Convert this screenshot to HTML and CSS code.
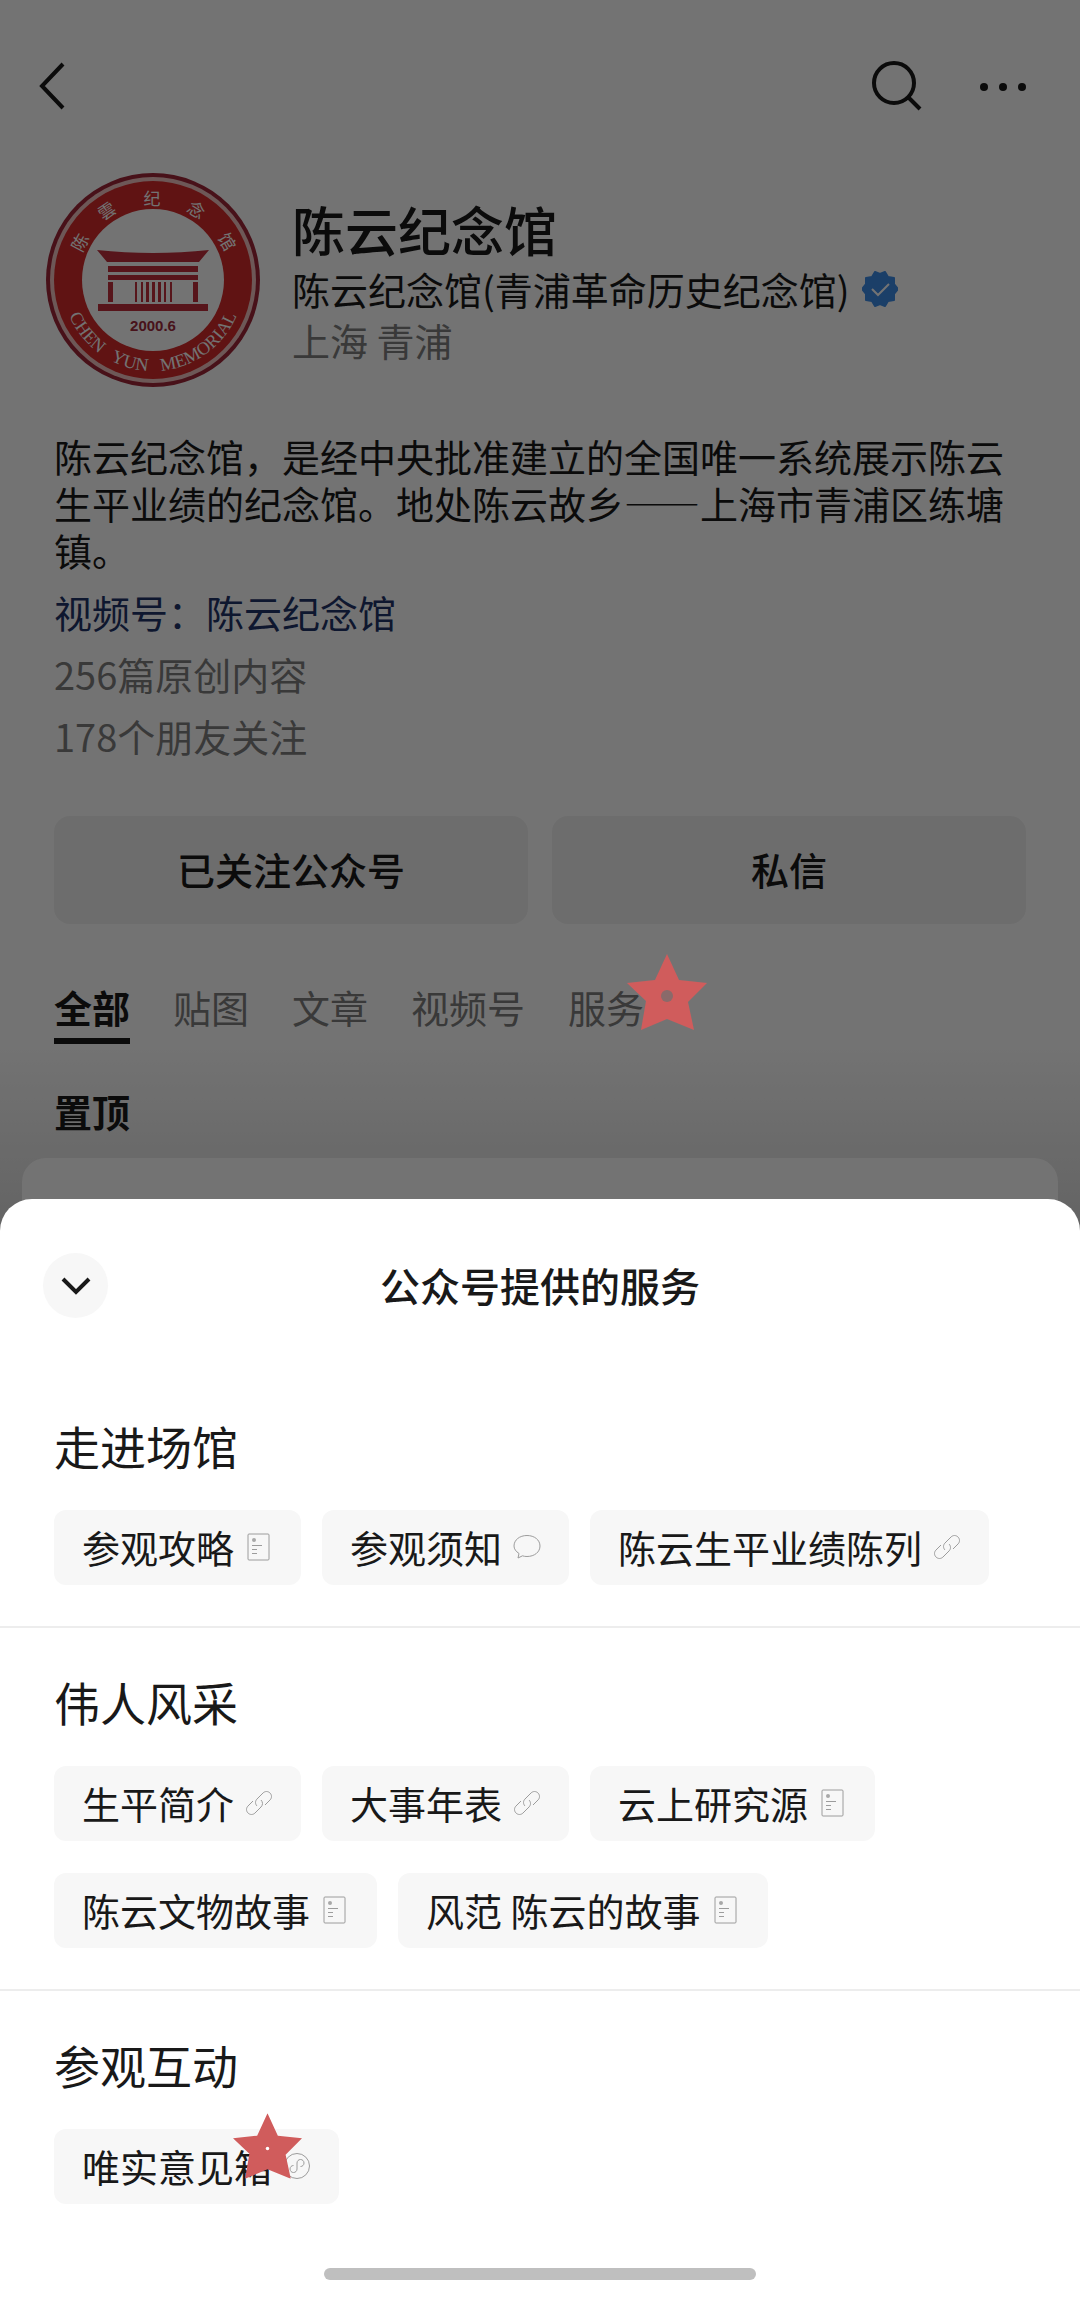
FILE: index.html
```html
<!DOCTYPE html>
<html lang="zh-CN">
<head>
    <meta charset="UTF-8">
    <meta name="viewport" content="width=device-width, initial-scale=1.0">
    <title>陈云纪念馆</title>
    <link rel="stylesheet" href="styles.css">
</head>
<body>
    <!-- shared icons -->
    <svg class="sprite" aria-hidden="true">
        <symbol id="icon-doc" viewBox="0 0 28 28">
            <rect x="3" y="1" width="21" height="26" rx="1"/>
            <circle class="fill" cx="9" cy="7" r="2"/>
            <path d="M7 12.500h10M7 16.500h5M7 20.500h5"/>
        </symbol>
        <symbol id="icon-chat" viewBox="0 0 28 28">
            <path d="M5 25l1-4.500C3 18.500 1 16 1 13 1 7 6.500 2.500 14 2.500S27 7 27 13s-5.500 10.500-13 10.500c-1.700 0-3.200-.200-4.500-.700z"/>
        </symbol>
        <symbol id="icon-link" viewBox="0 0 28 28">
            <path d="M12 17c-2-2-2-5 0-7l6-6c2-2 5-2 7 0s2 5 0 7l-5 5"/>
            <path d="M16 11c2 2 2 5 0 7l-6 6c-2 2-5 2-7 0s-2-5 0-7l5-5"/>
        </symbol>
        <symbol id="icon-mini" viewBox="0 0 28 28">
            <circle cx="14" cy="14" r="12.500"/>
            <path d="M10.500 13.500c-2 0-3.500 1.500-3.500 3.500s1.500 3.500 3.500 3.500 3.500-1.500 3.500-3.500v-6c0-2 1.500-3.500 3.500-3.500s3.500 1.500 3.500 3.500-1.500 3.500-3.500 3.500"/>
        </symbol>
        <symbol id="icon-star" viewBox="0 0 80 76">
            <path d="M40 0l12 26 28 3-19 19 6 28-27-11-26 11 5-29L0 29l28-3z"/>
        </symbol>
    </svg>

    <main class="page">
        <header class="topbar">
            <button class="icon-btn" aria-label="返回">
                <svg width="30" height="50" viewBox="0 0 30 50"><path d="M25 3L4 25l21 22"/></svg>
            </button>
            <div class="topbar-right">
                <button class="icon-btn" aria-label="搜索">
                    <svg width="54" height="54" viewBox="0 0 54 54"><circle cx="24" cy="24" r="20"/><path d="M38 38l12 12"/></svg>
                </button>
                <button class="icon-btn" aria-label="更多">
                    <svg width="50" height="12" viewBox="0 0 50 12"><g class="fill"><circle cx="6" cy="7" r="4"/><circle cx="25" cy="7" r="4"/><circle cx="44" cy="7" r="4"/></g></svg>
                </button>
            </div>
        </header>

        <section class="profile">
            <svg class="logo" viewBox="0 0 214 214" role="img" aria-label="陈云纪念馆">
                <defs>
                    <path id="arc-bottom" d="M16 107a91 91 0 0 0 182 0"/>
                </defs>
                <circle cx="107" cy="107" r="107" fill="#a02638"/>
                <circle cx="107" cy="107" r="103" fill="#f2c4c2"/>
                <circle cx="107" cy="107" r="99" fill="#d42a2b"/>
                <circle cx="107" cy="107" r="71" fill="#fff"/>
                <g class="logo-cn">
                    <text transform="translate(33 69) rotate(-62)">陈</text>
                    <text transform="translate(60 37) rotate(-34)">雲</text>
                    <text transform="translate(106 24)">纪</text>
                    <text transform="translate(151 36) rotate(32)">念</text>
                    <text transform="translate(182 68) rotate(60)">馆</text>
                </g>
                <text class="logo-en"><textPath href="#arc-bottom" startOffset="50%" text-anchor="middle" xml:space="preserve">CHEN &#160; YUN &#160; MEMORIAL</textPath></text>
                <g fill="#c0303c">
                    <path d="M51 77c37 4 75 4 112 0l-10 12H61z"/>
                    <path d="M62 93h90v6H62zM62 102h90v5H62zM62 109h5v20h-5zM147 109h5v20h-5zM52 131h110v7H52z"/>
                    <path d="M89 109h2v20h-2zM95 109h2v20h-2zM100 109h3v20h-3zM106 109h3v20h-3zM112 109h3v20h-3zM118 109h2v20h-2zM124 109h2v20h-2z"/>
                </g>
                <text class="logo-date" x="107" y="158">2000.6</text>
            </svg>
            <div class="profile-text">
                <h1>陈云纪念馆</h1>
                <div class="company">
                    <span>陈云纪念馆(青浦革命历史纪念馆)</span>
                    <svg width="36" height="36" viewBox="0 0 36 36" role="img" aria-label="已认证">
                        <path fill="#3d8ce6" stroke="#3d8ce6" stroke-width="2" stroke-linejoin="round" d="M18 3l5-2 3 5 6 1v6l4 5-4 5v6l-6 1-3 5-5-2-5 2-3-5-6-1v-6l-4-5 4-5V7l6-1 3-5z"/>
                        <path fill="none" stroke="#fff" stroke-width="2" d="M10 18l6 6 11-11"/>
                    </svg>
                </div>
                <div class="muted">上海 青浦</div>
            </div>
        </section>

        <section class="about">
            <p>陈云纪念馆，是经中央批准建立的全国唯一系统展示陈云生平业绩的纪念馆。地处陈云故乡——上海市青浦区练塘镇。</p>
            <a href="#channel">视频号：陈云纪念馆</a>
            <div class="muted">256篇原创内容</div>
            <div class="muted">178个朋友关注</div>
        </section>

        <div class="actions">
            <button>已关注公众号</button>
            <button>私信</button>
        </div>

        <nav class="tabs">
            <a class="active" href="#all">全部</a>
            <a href="#images">贴图</a>
            <a href="#articles">文章</a>
            <a href="#channel">视频号</a>
            <a href="#services">服务</a>
        </nav>

        <section class="pinned">
            <h2>置顶</h2>
            <div class="card"></div>
        </section>
    </main>

    <div class="mask">
        <svg class="star star-tab"><use href="#icon-star"/><circle cx="40" cy="42" r="6"/></svg>
        <section class="sheet" role="dialog" aria-labelledby="sheet-title">
            <header class="sheet-header">
                <button class="close" aria-label="收起">
                    <svg width="32" height="20" viewBox="0 0 32 20"><path d="M3 3l13 13L29 3"/></svg>
                </button>
                <h2 id="sheet-title">公众号提供的服务</h2>
            </header>

            <section class="group">
                <h3>走进场馆</h3>
                <div class="chips">
                    <button class="chip">参观攻略<svg><use href="#icon-doc"/></svg></button>
                    <button class="chip">参观须知<svg><use href="#icon-chat"/></svg></button>
                    <button class="chip">陈云生平业绩陈列<svg><use href="#icon-link"/></svg></button>
                </div>
            </section>

            <section class="group">
                <h3>伟人风采</h3>
                <div class="chips">
                    <button class="chip">生平简介<svg><use href="#icon-link"/></svg></button>
                    <button class="chip">大事年表<svg><use href="#icon-link"/></svg></button>
                    <button class="chip">云上研究源<svg><use href="#icon-doc"/></svg></button>
                    <button class="chip">陈云文物故事<svg><use href="#icon-doc"/></svg></button>
                    <button class="chip">风范 陈云的故事<svg><use href="#icon-doc"/></svg></button>
                </div>
            </section>

            <section class="group">
                <h3>参观互动</h3>
                <div class="chips">
                    <div class="marked">
                        <button class="chip">唯实意见箱<svg><use href="#icon-mini"/></svg></button>
                        <svg class="star star-chip" viewBox="0 0 80 76"><use href="#icon-star"/><circle cx="40" cy="41" r="2"/></svg>
                    </div>
                </div>
            </section>

            <div class="home-bar"></div>
        </section>
    </div>
</body>
</html>
```

FILE: styles.css
```css
* { box-sizing: border-box; }
body {
    margin: 0;
    background-color: #fff;
    color: #191919;
    font-family: "Noto Sans CJK SC", sans-serif;
    font-size: 38px;
    line-height: 47px;
}
h1, h2, h3, p { margin: 0; }
a { text-decoration: none; }
button {
    border: none;
    padding: 0;
    background: none;
    color: inherit;
    font: inherit;
    cursor: pointer;
}
svg { display: block; flex-shrink: 0; }
.sprite { position: absolute; width: 0; height: 0; }
.muted { color: #7f7f7f; }

/* account page */
.page {
    display: flex;
    flex-direction: column;
    min-height: 100vh;
}
.topbar {
    display: flex;
    justify-content: space-between;
    align-items: center;
    padding: 56px 52px 0 38px;
    height: 116px;
}
.topbar-right { display: flex; align-items: center; gap: 54px; }
.icon-btn svg { fill: none; stroke: #191919; stroke-width: 4; }
.icon-btn .fill { fill: #191919; stroke: none; }

.profile {
    display: flex;
    align-items: center;
    gap: 32px;
    padding: 57px 46px 0;
}
.logo { width: 214px; height: 214px; }
.logo-cn {
    fill: #fff;
    font-family: "Noto Sans CJK SC", sans-serif;
    font-size: 17px;
    text-anchor: middle;
    dominant-baseline: central;
}
.logo-en { fill: #fff; font-family: "Liberation Serif", serif; font-size: 18px; }
.logo-date {
    fill: #a02a3c;
    font-family: "Liberation Sans", sans-serif;
    font-size: 15px;
    font-weight: 700;
    text-anchor: middle;
}
.profile-text { padding-bottom: 4px; }
h1 { font-size: 53px; font-weight: 500; line-height: 72px; }
.company { display: flex; align-items: center; gap: 12px; }
.profile-text .muted { margin-top: 4px; }

.about {
    display: flex;
    flex-direction: column;
    gap: 15px;
    padding: 45px 54px 0;
}
.about a { color: #1f3468; }

.actions {
    display: flex;
    gap: 24px;
    padding: 57px 54px 0;
}
.actions button {
    flex: 1;
    height: 108px;
    padding-bottom: 4px;
    border-radius: 16px;
    background-color: #f2f2f2;
    font-weight: 500;
}

.tabs {
    display: flex;
    gap: 43px;
    padding: 59px 54px 0;
}
.tabs a {
    padding-bottom: 8px;
    border-bottom: 6px solid transparent;
    color: #7f7f7f;
}
.tabs .active { border-color: #191919; color: #191919; font-weight: 700; }

.pinned {
    display: flex;
    flex-direction: column;
    flex: 1;
    gap: 24px;
    padding: 43px 22px 0;
    background: linear-gradient(#fff, #dadada 200px);
}
.pinned h2 { padding: 0 32px; font-size: 38px; font-weight: 700; }
.card { flex: 1; border-radius: 24px; background-color: #fff; }

/* bottom sheet over the page */
.mask {
    position: fixed;
    inset: 0;
    display: flex;
    flex-direction: column;
    justify-content: flex-end;
    background-color: rgba(0, 0, 0, 0.55);
}
.sheet {
    border-radius: 32px 32px 0 0;
    background-color: #fff;
}
.sheet-header {
    display: grid;
    grid-template-columns: 65px 1fr 65px;
    align-items: center;
    padding: 54px 43px;
}
.close {
    display: grid;
    place-items: center;
    width: 65px;
    height: 65px;
    border-radius: 50%;
    background-color: #f7f7f7;
}
.close svg { fill: none; stroke: #191919; stroke-width: 4; }
.sheet-header h2 { font-size: 40px; font-weight: 500; text-align: center; }

.group { padding: 47px 54px 41px; border-bottom: 2px solid #ededed; }
.group:last-of-type { border-color: transparent; }
.group h3 {
    margin-bottom: 39px;
    font-size: 46px;
    font-weight: 400;
    line-height: 52px;
}
.chips { display: flex; flex-wrap: wrap; gap: 32px 21px; }
.chip {
    display: flex;
    align-items: center;
    gap: 11px;
    height: 75px;
    padding: 0 28px 2px;
    border-radius: 12px;
    background-color: #f7f7f7;
}
.chip svg { width: 28px; height: 28px; fill: none; stroke: #9c9c9c; stroke-width: 1; }
.fill { fill: #a8a8a8; stroke: none; }

.star { position: absolute; fill: #d05c5c; }
.star circle { fill: #8a6a6a; }
.star-tab { top: 954px; left: 627px; width: 80px; height: 76px; }
.marked { position: relative; }
.star-chip { top: -16px; left: 179px; width: 69px; height: 66px; }
.star-chip circle { fill: #fff; }

.home-bar {
    width: 40%;
    height: 12px;
    margin: 21px auto;
    border-radius: 6px;
    background-color: #bfbfbf;
}
```
